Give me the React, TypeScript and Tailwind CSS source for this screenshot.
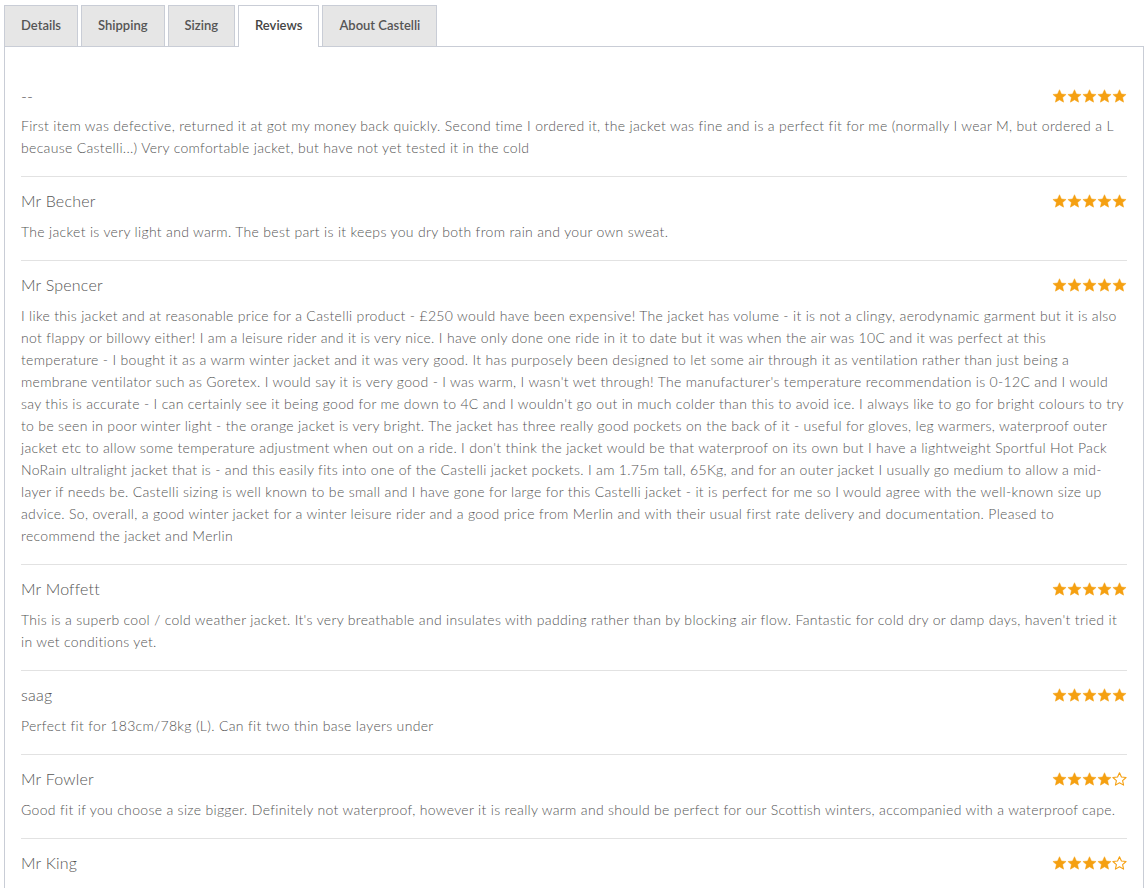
// Product tabs with the Reviews tab open

const tabs = ['Details', 'Shipping', 'Sizing', 'Reviews', 'About Castelli'];

type Review = { name: string; rating: number; text: string };

const reviews: Review[] = [
  {
    name: '--',
    rating: 5,
    text: 'First item was defective, returned it at got my money back quickly. Second time I ordered it, the jacket was fine and is a perfect fit for me (normally I wear M, but ordered a L because Castelli...) Very comfortable jacket, but have not yet tested it in the cold',
  },
  {
    name: 'Mr Becher',
    rating: 5,
    text: 'The jacket is very light and warm. The best part is it keeps you dry both from rain and your own sweat.',
  },
  {
    name: 'Mr Spencer',
    rating: 5,
    text: "I like this jacket and at reasonable price for a Castelli product - £250 would have been expensive! The jacket has volume - it is not a clingy, aerodynamic garment but it is also not flappy or billowy either! I am a leisure rider and it is very nice. I have only done one ride in it to date but it was when the air was 10C and it was perfect at this temperature - I bought it as a warm winter jacket and it was very good. It has purposely been designed to let some air through it as ventilation rather than just being a membrane ventilator such as Goretex. I would say it is very good - I was warm, I wasn't wet through! The manufacturer's temperature recommendation is 0-12C and I would say this is accurate - I can certainly see it being good for me down to 4C and I wouldn't go out in much colder than this to avoid ice. I always like to go for bright colours to try to be seen in poor winter light - the orange jacket is very bright. The jacket has three really good pockets on the back of it - useful for gloves, leg warmers, waterproof outer jacket etc to allow some temperature adjustment when out on a ride. I don't think the jacket would be that waterproof on its own but I have a lightweight Sportful Hot Pack NoRain ultralight jacket that is - and this easily fits into one of the Castelli jacket pockets. I am 1.75m tall, 65Kg, and for an outer jacket I usually go medium to allow a mid-layer if needs be. Castelli sizing is well known to be small and I have gone for large for this Castelli jacket - it is perfect for me so I would agree with the well-known size up advice. So, overall, a good winter jacket for a winter leisure rider and a good price from Merlin and with their usual first rate delivery and documentation. Pleased to recommend the jacket and Merlin",
  },
  {
    name: 'Mr Moffett',
    rating: 5,
    text: "This is a superb cool / cold weather jacket. It's very breathable and insulates with padding rather than by blocking air flow. Fantastic for cold dry or damp days, haven't tried it in wet conditions yet.",
  },
  {
    name: 'saag',
    rating: 5,
    text: 'Perfect fit for 183cm/78kg (L). Can fit two thin base layers under',
  },
  {
    name: 'Mr Fowler',
    rating: 4,
    text: 'Good fit if you choose a size bigger. Definitely not waterproof, however it is really warm and should be perfect for our Scottish winters, accompanied with a waterproof cape.',
  },
  {
    name: 'Mr King',
    rating: 4,
    text: 'Lovely jacket, good fit and keeps you warm on cold mornings. Would recommend this to anyone looking for a winter cycling jacket that is comfortable.',
  },
];

function Star({ filled }: { filled: boolean }) {
  return (
    <svg width="15" height="14" viewBox="0 0 24 23" className="block">
      <path
        d="M12 1.2l3.2 7 7.6.8-5.7 5.1 1.6 7.5L12 17.8l-6.7 3.8 1.6-7.5L1.2 9l7.6-.8z"
        fill={filled ? '#f5a011' : '#fff'}
        stroke="#f5a011"
        strokeWidth={filled ? 0.8 : 1.8}
        strokeLinejoin="round"
      />
    </svg>
  );
}

function Stars({ rating }: { rating: number }) {
  return (
    <div className="flex">
      {[1, 2, 3, 4, 5].map((i) => (
        <Star key={i} filled={i <= rating} />
      ))}
    </div>
  );
}

export default function App() {
  return (
    <div
      className="min-h-screen bg-white pl-1 pt-[5px] pr-[3px]"
      style={{ fontFamily: 'Lato, "Open Sans", Arial, sans-serif' }}
    >
      {/* tab strip */}
      <div className="flex items-end gap-[3px]">
        {tabs.map((t) => {
          const active = t === 'Reviews';
          return (
            <div
              key={t}
              className={
                active
                  ? 'relative -mb-px h-[42px] border border-b-0 border-[#c9cdd6] bg-white px-[16px] pt-[10px] text-[13px] font-semibold text-[#444]'
                  : 'h-[41px] border border-b-0 border-[#c9cdd6] bg-[#e6e6e6] px-[16px] pt-[10px] text-[13px] font-semibold text-[#555]'
              }
            >
              {t}
            </div>
          );
        })}
      </div>

      {/* reviews panel */}
      <div className="border border-[#c9cdd6] px-4 pt-[25px]">
        {reviews.map((r, i) => (
          <div
            key={r.name}
            className={
              i === 0
                ? 'pt-[13px] pb-[17px]'
                : 'border-t border-[#e2e2e2] pt-[13px] pb-[17px]'
            }
          >
            <div className="flex h-[22px] items-center justify-between">
              <span className="text-[16px] font-light tracking-[0.2px] text-[#555]">{r.name}</span>
              <Stars rating={r.rating} />
            </div>
            <p
              className={
                i === 0
                  ? 'mt-[8px] text-[14px] font-light leading-[22px] tracking-[0.32px] text-[#555]'
                  : 'mt-[9px] text-[14px] font-light leading-[22px] tracking-[0.32px] text-[#555]'
              }
            >
              {r.text}
            </p>
          </div>
        ))}
      </div>
    </div>
  );
}
